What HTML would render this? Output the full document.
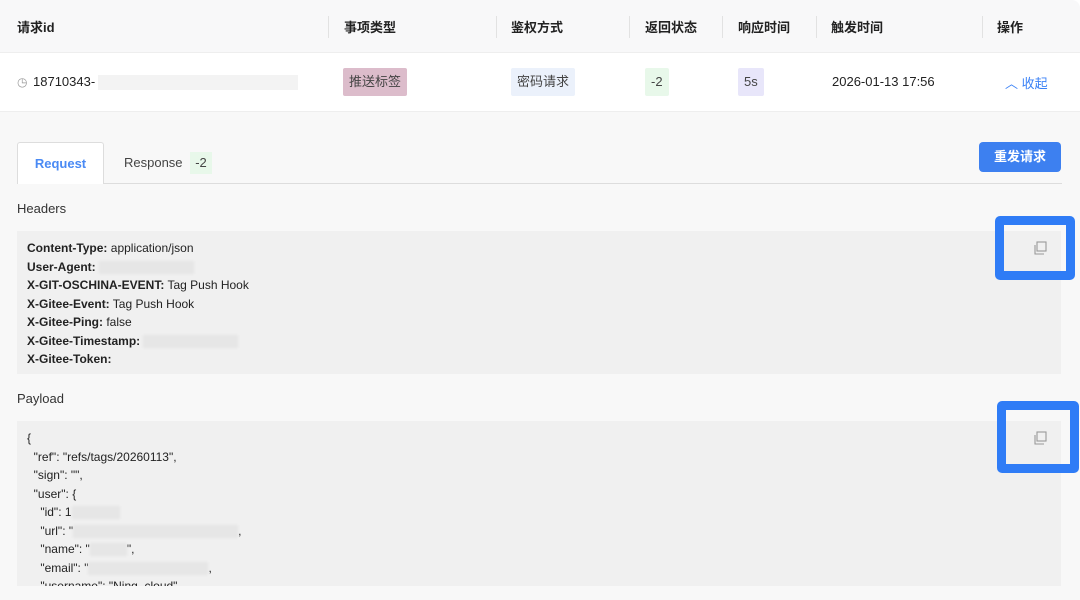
<!DOCTYPE html><html><head><meta charset="utf-8"><style>
*{margin:0;padding:0;box-sizing:border-box}
body{width:1080px;height:600px;overflow:hidden;background:#fff;font-family:"Liberation Sans","Noto Sans CJK SC",sans-serif;color:#222;position:relative}
.a{position:absolute}
.hd{top:0;left:0;width:1080px;height:53px;background:#f8f8f9;border-bottom:1px solid #eee;border-top-right-radius:8px}
.hd span{position:absolute;top:17px;font-size:13px;font-weight:bold;color:#222}
.sep{position:absolute;top:16px;width:1px;height:22px;background:#e2e2e2}
.row span{position:absolute;font-size:13px}
.tag{position:absolute;top:68px;height:28px;line-height:28px;padding:0 6px;font-size:13px;color:#444;border-radius:2px}
.panel{top:112px;left:0;width:1080px;height:488px;background:#f8f8f8}
.code{background:#f0f0f0;font-size:12px;line-height:18.5px;padding:8px 10px}
b{font-weight:bold}
.blur{display:inline-block;background:#e6e6e6;height:13px;vertical-align:middle;filter:blur(1px)}
.bb{position:absolute;border:9px solid #2f7cf6;border-radius:5px}
</style></head><body>
<div class="a hd">
<span style="left:17px">请求id</span><span style="left:344px">事项类型</span><span style="left:511px">鉴权方式</span><span style="left:645px">返回状态</span><span style="left:738px">响应时间</span><span style="left:831px">触发时间</span><span style="left:997px">操作</span>
<div class="sep" style="left:328px"></div><div class="sep" style="left:496px"></div><div class="sep" style="left:629px"></div><div class="sep" style="left:722px"></div><div class="sep" style="left:816px"></div><div class="sep" style="left:982px"></div>
</div>
<div class="row">
<span style="left:17px;top:75px;color:#999;font-size:12px">◷</span>
<span style="left:33px;top:74px">18710343-</span>
<div class="a" style="left:98px;top:75px;width:200px;height:15px;background:#f3f3f3"></div>
<div class="tag" style="left:343px;background:#dcbccb">推送标签</div>
<div class="tag" style="left:511px;background:#ebf1fb">密码请求</div>
<div class="tag" style="left:645px;background:#e8f8ea">-2</div>
<div class="tag" style="left:738px;background:#e8e6fa">5s</div>
<span style="left:832px;top:74px">2026-01-13 17:56</span>
<span style="left:1005px;top:73px;color:#3b82f6">︿ 收起</span>
</div>
<div class="a" style="left:0;top:111px;width:1080px;height:1px;background:#eee"></div>
<div class="a panel"></div>
<div class="a" style="left:17px;top:183px;width:1045px;height:1px;background:#ddd"></div>
<div class="a" style="left:17px;top:142px;width:87px;height:42px;background:#fff;border:1px solid #ddd;border-bottom:none;border-radius:3px 3px 0 0;color:#4a8af4;font-weight:bold;font-size:13px;text-align:center;line-height:42px">Request</div>
<div class="a" style="left:124px;top:155px;font-size:13px;color:#444">Response</div>
<div class="a" style="left:190px;top:152px;width:22px;height:22px;background:#e8f8ea;font-size:13px;color:#444;text-align:center;line-height:22px">-2</div>
<div class="a" style="left:979px;top:142px;width:82px;height:30px;background:#3d80f0;border-radius:4px;color:#fff;font-size:13px;font-weight:bold;text-align:center;line-height:30px">重发请求</div>
<div class="a" style="left:17px;top:201px;font-size:13px;color:#333">Headers</div>
<div class="a code" style="left:17px;top:231px;width:1044px;height:143px">
<b>Content-Type:</b> application/json<br><b>User-Agent:</b> <span class="blur" style="width:95px"></span><br><b>X-GIT-OSCHINA-EVENT:</b> Tag Push Hook<br><b>X-Gitee-Event:</b> Tag Push Hook<br><b>X-Gitee-Ping:</b> false<br><b>X-Gitee-Timestamp:</b> <span class="blur" style="width:95px"></span><br><b>X-Gitee-Token:</b></div>
<div class="a" style="left:17px;top:391px;font-size:13px;color:#333">Payload</div>
<div class="a code" style="left:17px;top:421px;width:1044px;height:165px;overflow:hidden;white-space:pre">{
  "ref": "refs/tags/20260113",
  "sign": "",
  "user": {
    "id": 1<span class="blur" style="width:48px"></span>
    "url": "<span class="blur" style="width:165px"></span>,
    "name": "<span class="blur" style="width:37px"></span>",
    "email": "<span class="blur" style="width:120px"></span>,
    "username": "Ning_cloud",</div>
<svg class="a" style="left:1033px;top:241px" width="14" height="14" viewBox="0 0 14 14" fill="none" stroke="#999" stroke-width="1.1"><rect x="4" y="1" width="9" height="9"/><path d="M2 4v9h9"/></svg>
<svg class="a" style="left:1033px;top:431px" width="14" height="14" viewBox="0 0 14 14" fill="none" stroke="#999" stroke-width="1.1"><rect x="4" y="1" width="9" height="9"/><path d="M2 4v9h9"/></svg>
<div class="bb" style="left:995px;top:216px;width:80px;height:64px"></div>
<div class="bb" style="left:997px;top:401px;width:82px;height:72px"></div>
</body></html>
